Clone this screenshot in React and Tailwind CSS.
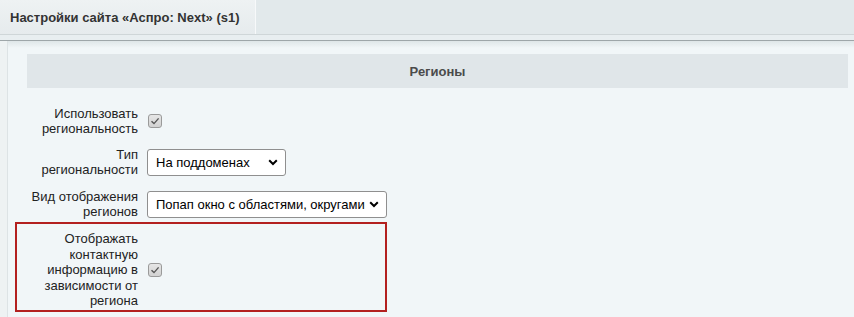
import React from "react";

function Check() {
  return (
    <div className="w-[14px] h-[14px] rounded-[3px] border border-[#9a9a9a] bg-gradient-to-b from-[#e6e6e6] to-[#d2d2d2] flex items-center justify-center">
      <svg width="10" height="10" viewBox="0 0 10 10">
        <path d="M1.5 5.2 L4 7.6 L8.6 2.4" fill="none" stroke="#555" strokeWidth="1.4" />
      </svg>
    </div>
  );
}

function Select({ text, w }) {
  return (
    <div className={`${w} h-[27px] rounded-[3px] border border-[#8f8f8f] bg-white flex items-center justify-between pl-[8px] pr-[7px] text-[13px] text-black`}>
      <span>{text}</span>
      <svg width="10" height="7" viewBox="0 0 10 7">
        <path d="M1.2 1.3 L5 5 L8.8 1.3" fill="none" stroke="#000" strokeWidth="2" />
      </svg>
    </div>
  );
}

export default function App() {
  return (
    <div className="w-[854px] h-[317px] overflow-hidden bg-[#f1f6f8] text-[13px] leading-[15px] text-[#222]" style={{ fontFamily: '"Liberation Sans", Arial, sans-serif' }}>
      <div className="h-[35px] bg-[#e2e9eb] flex border-b border-[#cfd6d8]">
        <div className="w-[256px] h-full bg-gradient-to-b from-[#eef2f3] to-[#e6ebed] border-r border-[#f7f9fa] flex items-center pl-[10px] pt-[1px] font-bold text-[#333]">
          Настройки сайта «Аспро: Next» (s1)
        </div>
      </div>
      <div className="h-[6px] bg-[#e8eef0] border-b border-[#9ea6a9]"></div>
      <div className="flex h-full">
        <div className="w-[8px] bg-[#eef2f3] border-r border-[#dde3e5]"></div>
        <div className="flex-1 bg-gradient-to-b from-[#dfe6e8] via-[#f1f6f8] to-[#f1f6f8] bg-[length:100%_14px] bg-no-repeat">
          <div className="ml-[19px] mr-[6px] mt-[13px] h-[34px] bg-[#e0e6e9] flex items-center justify-center font-bold text-[#4b4b4b]">
            Регионы
          </div>
          <div className="ml-[7px]">
            <div className="flex items-center mt-[18px] px-[2px]">
              <div className="w-[121px] text-right">Использовать<br />региональность</div>
              <div className="ml-[10px]"><Check /></div>
            </div>
            <div className="flex items-center mt-[11px] px-[2px]">
              <div className="w-[121px] text-right">Тип<br />региональности</div>
              <div className="ml-[9px]"><Select text="На поддоменах" w="w-[139px]" /></div>
            </div>
            <div className="flex items-center mt-[12px] px-[2px]">
              <div className="w-[121px] text-right">Вид отображения<br />регионов</div>
              <div className="ml-[9px]"><Select text="Попап окно с областями, округами" w="w-[240px]" /></div>
            </div>
            <div className="mt-[3px] w-[372px] border-2 border-[#b3201f] flex items-center pt-[7px] pb-[1px] leading-[15.5px]">
              <div className="w-[121px] text-right">Отображать<br />контактную<br />информацию в<br />зависимости от<br />региона</div>
              <div className="ml-[10px]"><Check /></div>
            </div>
          </div>
        </div>
      </div>
    </div>
  );
}
